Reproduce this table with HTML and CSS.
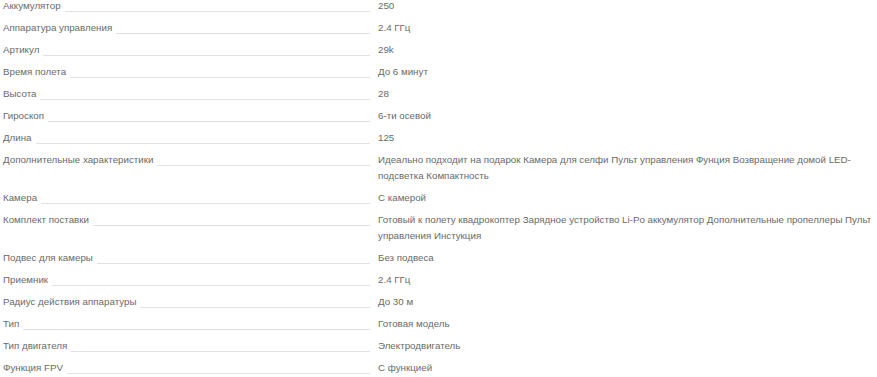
FILE: index.html
```html
<!DOCTYPE html>
<html lang="ru">
<head>
<meta charset="utf-8">
<link rel="stylesheet" href="styles.css">
</head>
<body>
<dl class="specs">
  <div class="row"><dt class="name"><span>Аккумулятор</span><i class="fill"></i></dt><dd class="value">250</dd></div>
  <div class="row"><dt class="name"><span>Аппаратура управления</span><i class="fill"></i></dt><dd class="value">2.4 ГГц</dd></div>
  <div class="row"><dt class="name"><span>Артикул</span><i class="fill"></i></dt><dd class="value">29k</dd></div>
  <div class="row"><dt class="name"><span>Время полета</span><i class="fill"></i></dt><dd class="value">До 6 минут</dd></div>
  <div class="row"><dt class="name"><span>Высота</span><i class="fill"></i></dt><dd class="value">28</dd></div>
  <div class="row"><dt class="name"><span>Гироскоп</span><i class="fill"></i></dt><dd class="value">6-ти осевой</dd></div>
  <div class="row"><dt class="name"><span>Длина</span><i class="fill"></i></dt><dd class="value">125</dd></div>
  <div class="row"><dt class="name"><span>Дополнительные характеристики</span><i class="fill"></i></dt><dd class="value">Идеально подходит на подарок Камера для селфи Пульт управления Фунция Возвращение домой LED-подсветка Компактность</dd></div>
  <div class="row"><dt class="name"><span>Камера</span><i class="fill"></i></dt><dd class="value">С камерой</dd></div>
  <div class="row"><dt class="name"><span>Комплект поставки</span><i class="fill"></i></dt><dd class="value">Готовый к полету квадрокоптер Зарядное устройство Li-Po аккумулятор Дополнительные пропеллеры Пульт управления Инстукция</dd></div>
  <div class="row"><dt class="name"><span>Подвес для камеры</span><i class="fill"></i></dt><dd class="value">Без подвеса</dd></div>
  <div class="row"><dt class="name"><span>Приемник</span><i class="fill"></i></dt><dd class="value">2.4 ГГц</dd></div>
  <div class="row"><dt class="name"><span>Радиус действия аппаратуры</span><i class="fill"></i></dt><dd class="value">До 30 м</dd></div>
  <div class="row"><dt class="name"><span>Тип</span><i class="fill"></i></dt><dd class="value">Готовая модель</dd></div>
  <div class="row"><dt class="name"><span>Тип двигателя</span><i class="fill"></i></dt><dd class="value">Электродвигатель</dd></div>
  <div class="row"><dt class="name"><span>Функция FPV</span><i class="fill"></i></dt><dd class="value">С функцией</dd></div>
</dl>
</body>
</html>
```
FILE: styles.css
```css
html, body {
  margin: 0;
  padding: 0;
  background: #fff;
}
body {
  font-family: "Liberation Sans", Arial, sans-serif;
  font-size: 9.75px;
  line-height: 16px;
  color: #6a6a6a;
}
.specs {
  margin: 0;
  padding: 0 4px 0 3px;
  display: flex;
  flex-direction: column;
  gap: 6px;
  position: relative;
  top: -2px;
}
.row {
  display: grid;
  grid-template-columns: 367px 1fr;
  column-gap: 8px;
}
.name {
  display: flex;
  align-items: flex-end;
  align-self: start;
  margin: 0;
  font-weight: normal;
}
.name span {
  white-space: nowrap;
  padding-right: 4px;
}
.fill {
  flex: 1;
  border-bottom: 1px solid #e2e2e2;
  margin-bottom: 2px;
}
.value {
  margin: 0;
}
```
